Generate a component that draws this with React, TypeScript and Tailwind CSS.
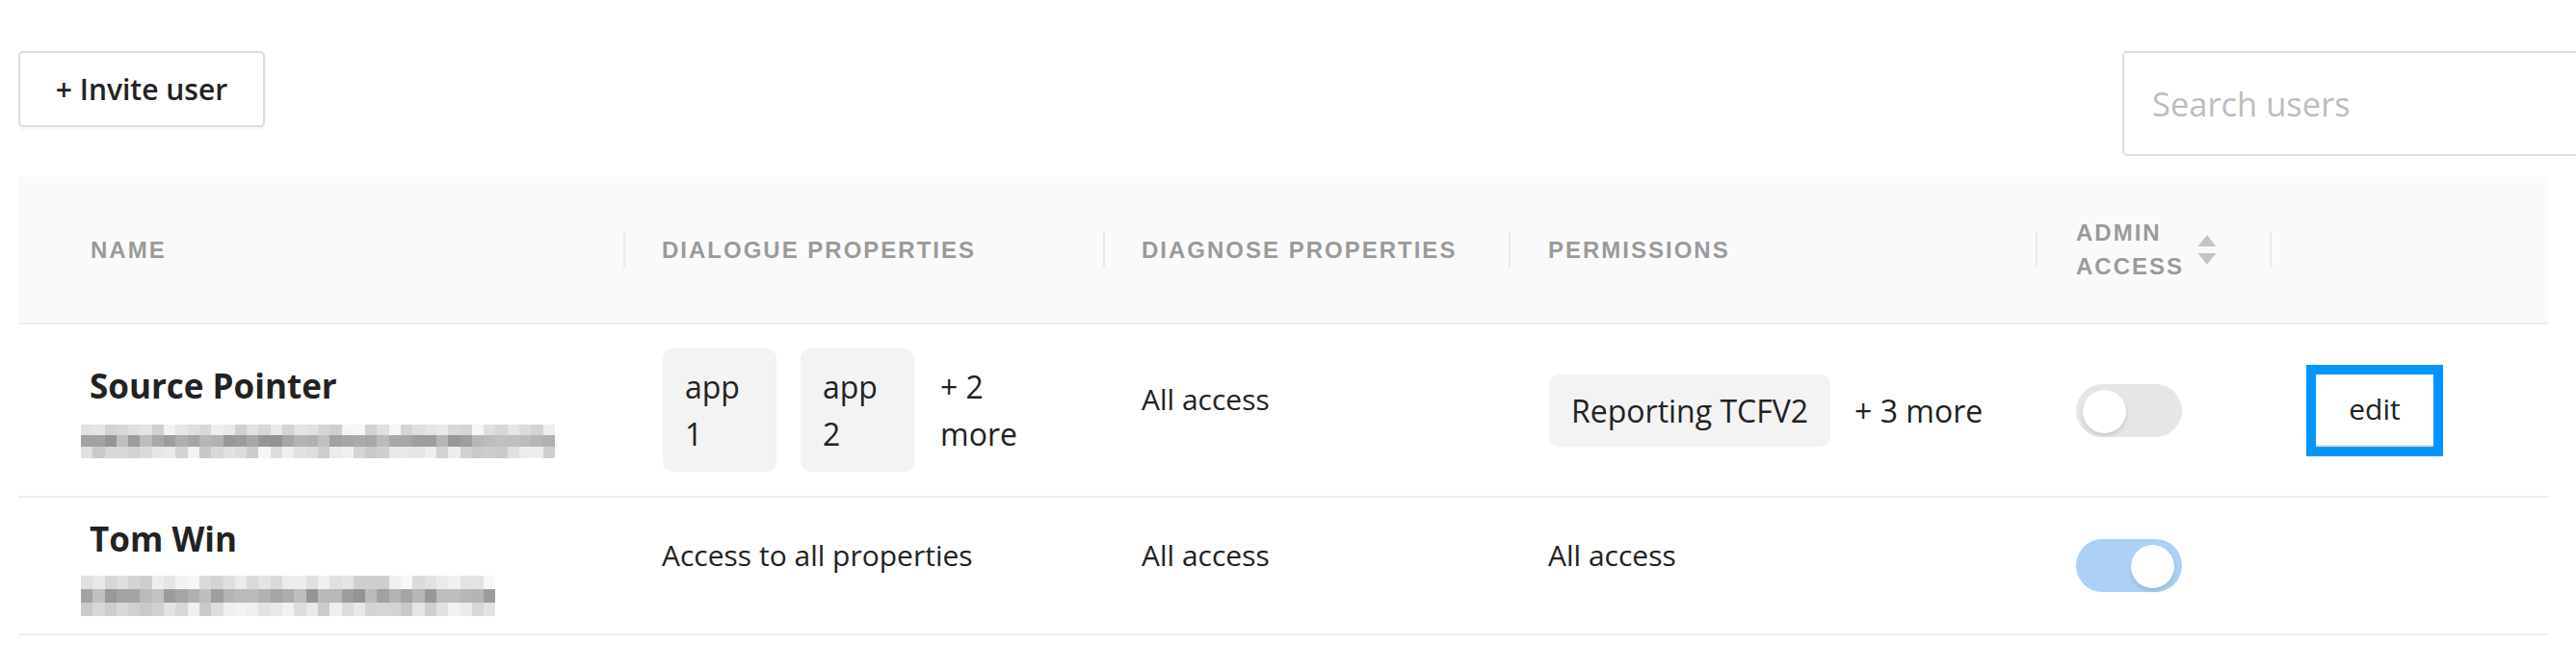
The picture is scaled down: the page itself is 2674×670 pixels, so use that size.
import React from "react";

const COLS = "grid grid-cols-[628px_498px_421px_547px_243px_289px]";

function makeRand(seed: number) {
  let s = seed;
  return () => {
    s = (s * 9301 + 49297) % 233280;
    return s / 233280;
  };
}

function Mosaic({ cols, heights, seed }: { cols: number; heights: number[]; seed: number }) {
  const r = makeRand(seed);
  const ranges: [number, number][] = [
    [205, 248],
    [145, 195],
    [200, 245],
  ];
  return (
    <div className="flex flex-col -ml-[9px]">
      {heights.map((h, ri) => (
        <div key={ri} className="flex">
          {Array.from({ length: cols }).map((_, ci) => {
            const [lo, hi] = ranges[ri];
            const v = Math.round(lo + r() * (hi - lo));
            return (
              <div
                key={ci}
                className="w-[12.3px] shrink-0"
                style={{ height: h, backgroundColor: `rgb(${v},${v},${v})` }}
              />
            );
          })}
        </div>
      ))}
    </div>
  );
}

function HeadCell({ label, first, pad = 38, children }: { label?: string; first?: boolean; pad?: number; children?: React.ReactNode }) {
  return (
    <div className="flex items-center h-full">
      {!first && <div className="w-[2px] h-[38px] bg-[#ebebeb] shrink-0" />}
      {label && (
        <div className="text-[24px] font-bold tracking-[2px] uppercase text-[#9a9a9a] leading-[35px] whitespace-nowrap" style={{ marginLeft: first ? 75 : pad }}>
          {label}
        </div>
      )}
      {children}
    </div>
  );
}

function Toggle({ on }: { on?: boolean }) {
  return (
    <div className={`relative w-[110px] h-[55px] rounded-full ${on ? "bg-[#acd1f4]" : "bg-[#e6e6e6]"}`}>
      <div
        className={`absolute top-[6px] w-[45px] h-[45px] rounded-full bg-white shadow-[0_3px_4px_rgba(0,0,0,0.12)] ${on ? "left-[57px]" : "left-[7px]"}`}
      />
    </div>
  );
}

export default function App() {
  return (
    <div className="w-[2674px] h-[670px] bg-white overflow-hidden font-['Open_Sans',sans-serif] text-[#222]">
      {/* top bar */}
      <div className="flex justify-between items-start w-[2724px] pl-[19px] pt-[53px]">
        <button className="w-[256px] h-[79px] border-2 border-[#dcdcdc] rounded-[5px] bg-white text-[30px] font-semibold text-[#222] shadow-[0_3px_3px_rgba(0,0,0,0.04)] flex items-center justify-center">
          + Invite user
        </button>
        <div className="w-[521px] h-[109px] border-2 border-[#dedede] rounded-[5px] flex items-center pl-[29px]">
          <input
            className="w-full outline-none bg-transparent text-[34.5px] placeholder:text-[#bdbdbd] font-['Open_Sans',sans-serif]"
            placeholder="Search users"
          />
        </div>
      </div>

      {/* table */}
      <div className="ml-[19px] mt-[21px] w-[2626px]">
        <div className={`${COLS} h-[154px] bg-[#fafafa] border-b-2 border-[#eeeeee] font-['Liberation_Sans',Arial,sans-serif]`}>
          <HeadCell label="Name" first />
          <HeadCell label="Dialogue properties" />
          <HeadCell label="Diagnose properties" />
          <HeadCell label="Permissions" pad={39} />
          <HeadCell>
            <div className="ml-[40px] w-[114px] text-[24px] font-bold tracking-[2px] uppercase text-[#9a9a9a] leading-[35px]">
              Admin access
            </div>
            <svg className="ml-[12px]" width="20" height="31" viewBox="0 0 20 31">
              <polygon points="10,0 19.5,12 0.5,12" fill="#c4c4c4" />
              <polygon points="0.5,19 19.5,19 10,31" fill="#c4c4c4" />
            </svg>
          </HeadCell>
          <HeadCell />
        </div>

        {/* row 1 */}
        <div className={`${COLS} h-[180px] border-b-2 border-[#eeeeee] text-[30px] leading-[49px]`}>
          <div className="flex flex-col justify-center pl-[74px]">
            <div className="text-[35px] font-bold leading-[48px] text-[#222]">Source Pointer</div>
            <div className="mt-[16px]">
              <Mosaic cols={40} heights={[11, 12, 12]} seed={7} />
            </div>
          </div>
          <div className="flex items-center pl-[41px] text-[32px]">
            <div className="w-[118px] px-[23px] py-[15px] rounded-[10px] bg-[#f3f3f3]">app 1</div>
            <div className="ml-[25px] w-[118px] px-[23px] py-[15px] rounded-[10px] bg-[#f3f3f3]">app 2</div>
            <div className="ml-[27px] w-[84px]">+ 2 more</div>
          </div>
          <div className="flex items-center pl-[40px]">
            <div className="pb-[23px]">All access</div>
          </div>
          <div className="flex items-center pl-[42px] text-[32px]">
            <div className="h-[75px] px-[23px] rounded-[10px] bg-[#f3f3f3] flex items-center whitespace-nowrap">Reporting TCFV2</div>
            <div className="ml-[25px] whitespace-nowrap">+ 3 more</div>
          </div>
          <div className="flex items-center pl-[42px]">
            <Toggle />
          </div>
          <div className="flex items-center pl-[38px]">
            <button className="w-[142px] h-[95px] border-[10px] border-[#0096ff] bg-white flex items-stretch">
              <span className="flex-1 flex items-center justify-center text-[30px] text-[#222] border-b-2 border-[#dddddd] leading-[49px] pb-[2px]">
                edit
              </span>
            </button>
          </div>
        </div>

        {/* row 2 */}
        <div className={`${COLS} h-[143px] border-b-2 border-[#eeeeee] text-[30px] leading-[49px]`}>
          <div className="flex flex-col justify-center pl-[74px]">
            <div className="text-[35px] font-bold leading-[48px] text-[#222]">Tom Win</div>
            <div className="mt-[14px]">
              <Mosaic cols={35} heights={[14, 14, 14]} seed={31} />
            </div>
          </div>
          <div className="flex items-center pl-[40px]">
            <div className="pb-[23px]">Access to all properties</div>
          </div>
          <div className="flex items-center pl-[40px]">
            <div className="pb-[23px]">All access</div>
          </div>
          <div className="flex items-center pl-[41px]">
            <div className="pb-[23px]">All access</div>
          </div>
          <div className="flex items-center pl-[42px]">
            <Toggle on />
          </div>
          <div />
        </div>
      </div>
    </div>
  );
}
